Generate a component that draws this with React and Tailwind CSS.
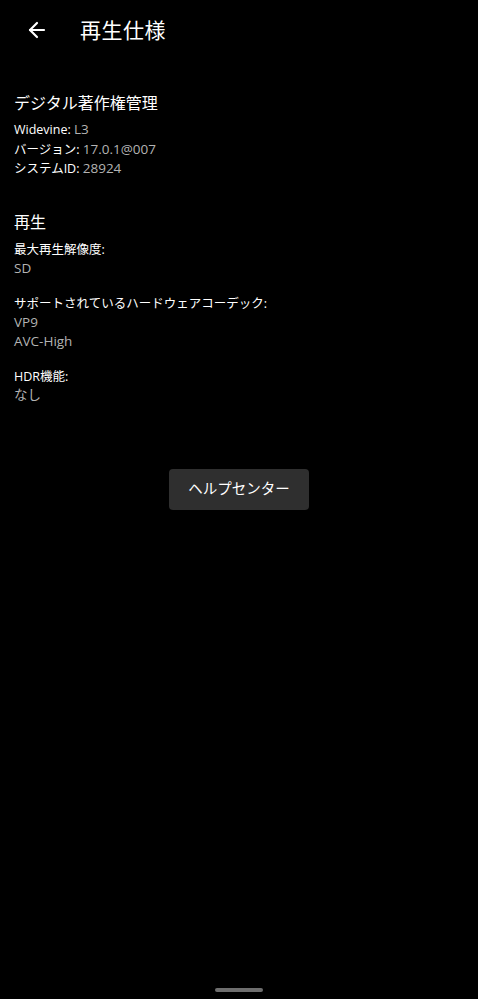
import { ArrowLeft } from 'lucide-react'

const FONT = { fontFamily: '"Open Sans", "Noto Sans CJK JP", "Noto Sans", sans-serif' }

const drm = [
  { label: 'Widevine:', value: 'L3' },
  { label: 'バージョン:', value: '17.0.1@007' },
  { label: 'システムID:', value: '28924' },
]

const playback = [
  { label: '最大再生解像度:', values: ['SD'] },
  { label: 'サポートされているハードウェアコーデック:', values: ['VP9', 'AVC-High'] },
  { label: 'HDR機能:', values: ['なし'] },
]

export default function App() {
  return (
    <div className="min-h-[999px] bg-black text-white flex flex-col" style={FONT}>
      {/* ヘッダー */}
      <div className="h-[60px] flex items-center">
        <button className="ml-[25px] w-[24px] h-[24px] flex items-center justify-center text-white" aria-label="戻る">
          <ArrowLeft className="w-[24px] h-[24px]" strokeWidth={2.2} />
        </button>
        <h1 className="ml-[31px] text-[21px] leading-none font-normal tracking-[0.5px]">再生仕様</h1>
      </div>

      <div className="px-[14px]">
        {/* デジタル著作権管理 */}
        <h2 className="mt-[32px] text-[16px] leading-[22px] font-normal">デジタル著作権管理</h2>
        <div className="mt-[6px] text-[12.5px] leading-[19.5px]">
          {drm.map((r) => (
            <div key={r.label}>
              <span className="text-white">{r.label}</span>{' '}
              <span className="text-[#b3b3b3] text-[13.5px]">{r.value}</span>
            </div>
          ))}
        </div>

        {/* 再生 */}
        <h2 className="mt-[32px] text-[16px] leading-[22px] font-normal">再生</h2>
        <div className="mt-[7px] flex flex-col gap-[16px] text-[12.5px] leading-[19px]">
          {playback.map((g) => (
            <div key={g.label}>
              <div className="text-white">{g.label}</div>
              {g.values.map((v) => (
                <div key={v} className="text-[#b3b3b3] text-[13.5px]">{v}</div>
              ))}
            </div>
          ))}
        </div>
      </div>

      <div className="mt-[64px] flex justify-center">
        <button className="w-[140px] h-[41px] rounded-[4px] bg-[#2f2f2f] text-white text-[14.5px]">
          ヘルプセンター
        </button>
      </div>

      <div className="mt-auto pb-[7px] flex justify-center">
        <div className="w-[48px] h-[4px] rounded-full bg-[#6e6e6e]" />
      </div>
    </div>
  )
}
